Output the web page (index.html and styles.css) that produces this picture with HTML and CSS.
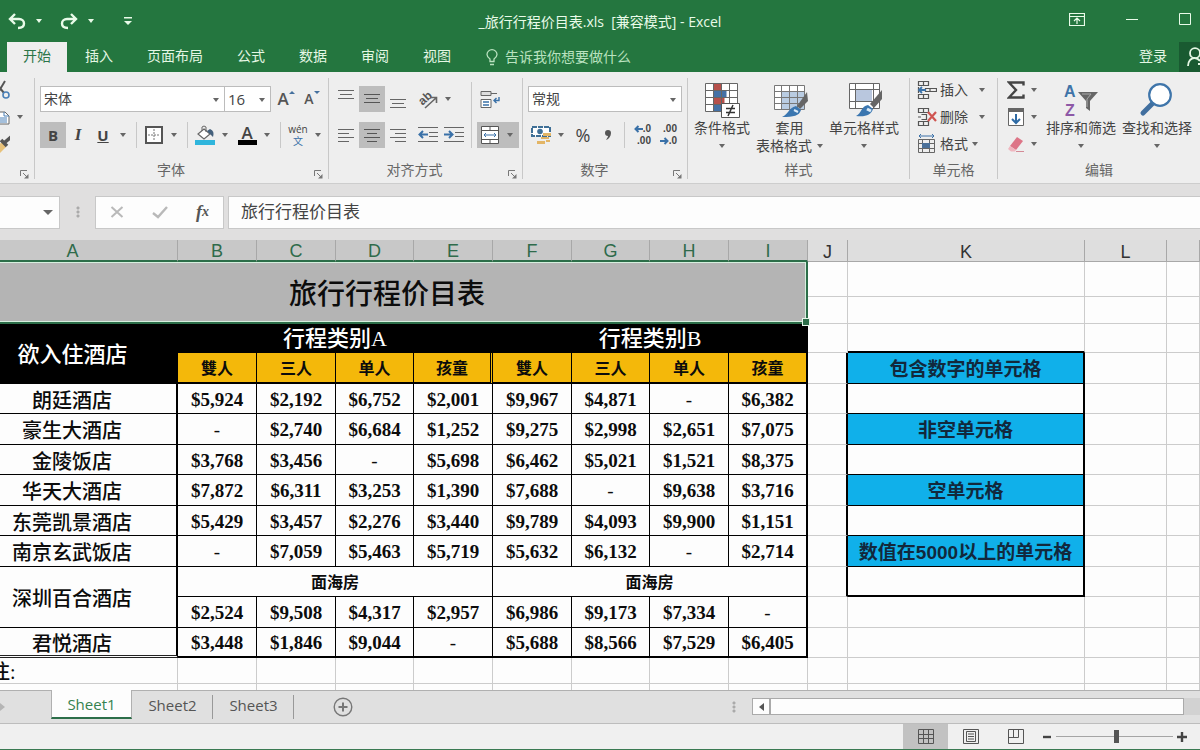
FILE: index.html
```html
<!DOCTYPE html>
<html lang="zh-CN">
<head>
<meta charset="utf-8">
<title>_旅行行程价目表.xls [兼容模式] - Excel</title>
<link rel="stylesheet" href="styles.css">
</head>
<body>
<header class="titlebar">
  <div class="quick">
    <button class="quick-btn" aria-label="撤消"><svg width="20" height="20" viewBox="0 0 20 20"><path d="M8 3 3 8l5 5M4 8h8c3 0 5 2 5 4.500S15 17 11 17" fill="none" stroke="currentColor" stroke-width="2.400"/></svg><i class="caret"></i></button>
    <button class="quick-btn" aria-label="恢复"><svg width="20" height="20" viewBox="0 0 20 20"><path d="m12 3 5 5-5 5M16 8H8c-3 0-5 2-5 4.500S5 17 9 17" fill="none" stroke="currentColor" stroke-width="2.400"/></svg><i class="caret"></i></button>
    <button class="quick-btn" aria-label="自定义快速访问工具栏"><svg width="8" height="9" viewBox="0 0 8 9"><path d="M0 0h8v1.500H0zM0 4h8L4 8z" fill="currentColor"/></svg></button>
  </div>
  <h1 class="doc-title">_旅行行程价目表.xls  [兼容模式] - Excel</h1>
  <div class="window-btns">
    <button aria-label="功能区显示选项"><svg width="16" height="13" viewBox="0 0 16 13"><path d="M.5.500h15v12H.5zM.5 3.500h15M8 11V5.500M5 8l3-3 3 3" fill="none" stroke="currentColor" stroke-width="1.200"/></svg></button>
    <button aria-label="最小化"><svg width="12" height="12" viewBox="0 0 12 12"><path d="M0 6.500h12" stroke="currentColor"/></svg></button>
    <button aria-label="最大化"><svg width="12" height="12" viewBox="0 0 12 12"><path d="M.5.500h11v11H.5z" fill="none" stroke="currentColor"/></svg></button>
  </div>
</header>

<nav class="tabs">
  <button class="tab tab-active">开始</button>
  <button class="tab">插入</button>
  <button class="tab">页面布局</button>
  <button class="tab">公式</button>
  <button class="tab">数据</button>
  <button class="tab">审阅</button>
  <button class="tab">视图</button>
  <button class="tell-me"><svg width="12" height="17" viewBox="0 0 12 17"><path d="M4 12.500V10C2 8.500 1 7.500 1 5.500a5 4.800 0 0 1 10 0c0 2-1 3-3 4.500v2.500zM4 15.500h4" fill="none" stroke="currentColor" stroke-width="1.300"/></svg>告诉我你想要做什么</button>
  <button class="sign-in">登录</button>
  <button class="share" aria-label="共享"><svg width="18" height="20" viewBox="0 0 18 20"><path d="M1 19c0-5 3-8 6.500-8 2 0 4 1 5.500 3M8 1.200a5 5 0 1 1 0 10 5 5 0 0 1 0-10M11 17h7" fill="none" stroke="currentColor" stroke-width="1.800"/></svg></button>
</nav>

<section class="ribbon">
  <div class="group group-clip">
    <div class="stack">
      <button class="row-btn" aria-label="剪切"><svg width="20" height="20" viewBox="0 0 20 20"><path d="m5 2 9 11M15 1l-6 10" stroke="#555" stroke-width="2" fill="none"/><circle cx="16" cy="15" r="3" fill="none" stroke="#4a80b8" stroke-width="1.600"/><circle cx="6" cy="15" r="3" fill="none" stroke="#4a80b8" stroke-width="1.600"/></svg></button>
      <button class="row-btn" aria-label="复制"><svg width="20" height="20" viewBox="0 0 20 20"><path d="M8 5h7l4 4v8H8z" fill="#fff" stroke="#666"/><path d="M14 5v4h5M10 11h7M10 13h7M10 15h7" fill="none" stroke="#4a80b8"/></svg><i class="caret"></i></button>
      <button class="row-btn" aria-label="格式刷"><svg width="20" height="20" viewBox="0 0 20 20"><path d="m5 14 7-6 4 5-6 6z" fill="#e8c27a"/><path d="m11 6 6 6M14 9l7-6" stroke="#555" stroke-width="3.600"/></svg></button>
    </div>
    <div class="group-foot"><span></span><button class="launch" aria-label="剪贴板设置"><svg width="9" height="9" viewBox="0 0 9 9"><path d="M.5 6V.500H7M3 3l4 4" fill="none" stroke="#777"/><path d="M8.500 4v4.500H4z" fill="#777"/></svg></button></div>
  </div>

  <div class="group group-font">
    <div class="tools">
      <div class="row">
        <span class="combo combo-font"><select aria-label="字体"><option>宋体</option></select></span><span class="combo combo-size"><select aria-label="字号"><option>16</option></select></span>
        <div class="after-combo">
          <button class="ib" aria-label="增大字号"><span class="ltr ltr-big">A</span><svg width="6" height="16" viewBox="0 0 6 16"><path d="M0 3h6L3 0z" fill="#44709e"/></svg></button><button class="ib" aria-label="减小字号"><span class="ltr">A</span><svg width="6" height="16" viewBox="0 0 6 16"><path d="M0 0h6L3 3z" fill="#44709e"/></svg></button>
        </div>
      </div>
      <div class="row">
        <button class="ib on" aria-label="加粗"><b class="biu">B</b></button>
        <button class="ib ib-i" aria-label="倾斜"><i class="biu biu-i">I</i></button>
        <button class="split" aria-label="下划线"><span class="ico"><u class="biu">U</u></span><i class="caret"></i></button>
        <span class="sep"></span>
        <button class="split" aria-label="边框"><span class="ico"><svg width="18" height="18" viewBox="0 0 18 18"><path d="M1 1h16v16H1z" fill="#fff" stroke="#555" stroke-width="2"/><path d="M9 3v12M3 9h12" stroke="#777" stroke-dasharray="2 1"/></svg></span><i class="caret"></i></button>
        <span class="sep"></span>
        <button class="split" aria-label="填充颜色"><span class="ico"><svg width="20" height="20" viewBox="0 0 20 20"><path d="M0 15h20v5H0z" fill="#2fb5dc"/><path d="m9 4 6 5-6 5-6-5z" fill="#fff" stroke="#666" stroke-width="1.200"/><path d="M7 6V2q2-2 4 0v5" fill="none" stroke="#666"/><path d="M15 4q5 2 3 8l-3-3-3-3z" fill="#44607c"/></svg></span><i class="caret"></i></button><button class="split" aria-label="字体颜色"><span class="ico"><span class="font-color">A</span></span><i class="caret"></i></button>
        <span class="sep"></span>
        <button class="split" aria-label="拼音"><span class="ico wen"><span>wén</span><span class="wen-zi">文</span></span><i class="caret"></i></button>
      </div>
    </div>
    <div class="group-foot"><span>字体</span><button class="launch" aria-label="字体设置"><svg width="9" height="9" viewBox="0 0 9 9"><path d="M.5 6V.500H7M3 3l4 4" fill="none" stroke="#777"/><path d="M8.500 4v4.500H4z" fill="#777"/></svg></button></div>
  </div>

  <div class="group group-align">
    <div class="cols">
      <div class="tools">
        <div class="row">
          <button class="ib" aria-label="顶端对齐"><svg width="18" height="20" viewBox="0 0 18 20"><path d="M1 1.500h16M3 5.500h12M1 9.500h16" stroke="#666"/></svg></button>
          <button class="ib on" aria-label="垂直居中"><svg width="18" height="20" viewBox="0 0 18 20"><path d="M1 5.500h16M3 9.500h12M1 13.500h16" stroke="#555"/></svg></button>
          <button class="ib" aria-label="底端对齐"><svg width="18" height="20" viewBox="0 0 18 20"><path d="M1 10.500h16M3 14.500h12M1 18.500h16" stroke="#666"/></svg></button>
          <button class="split split-gap" aria-label="方向"><span class="ico"><svg width="22" height="22" viewBox="0 0 22 22"><text x="1" y="14" transform="rotate(-42 8 10)" font-size="12" font-family="Liberation Sans" font-weight="700" fill="#555">ab</text><path d="m8 20 11-10M14 9.500h5.500V15" fill="none" stroke="#666" stroke-width="1.600"/></svg></span><i class="caret"></i></button>
        </div>
        <div class="row">
          <button class="ib" aria-label="左对齐"><svg width="18" height="16" viewBox="0 0 18 16"><path d="M1 2.500h16M1 6.500h11M1 10.500h16M1 14.500h11" stroke="#666"/></svg></button>
          <button class="ib on" aria-label="居中"><svg width="18" height="16" viewBox="0 0 18 16"><path d="M1 2.500h16M4 6.500h10M1 10.500h16M4 14.500h10" stroke="#555"/></svg></button>
          <button class="ib" aria-label="右对齐"><svg width="18" height="16" viewBox="0 0 18 16"><path d="M1 2.500h16M6 6.500h11M1 10.500h16M6 14.500h11" stroke="#666"/></svg></button>
          <span class="pair"><button class="ib" aria-label="减少缩进量"><svg width="20" height="16" viewBox="0 0 20 16"><path d="M0 .500h20M11 5.500h9M11 9.500h9M0 14.500h20" stroke="#666"/><path d="M10 7.500H2M5 4 1.500 7.500 5 11" fill="none" stroke="#3a71a8" stroke-width="2"/></svg></button><button class="ib" aria-label="增加缩进量"><svg width="20" height="16" viewBox="0 0 20 16"><path d="M0 .500h20M11 5.500h9M11 9.500h9M0 14.500h20" stroke="#666"/><path d="M0 7.500h8M5 4l3.500 3.500L5 11" fill="none" stroke="#3a71a8" stroke-width="2"/></svg></button></span>
        </div>
      </div>
      <span class="sep sep-tall"></span>
      <div class="tools">
        <div class="row"><button class="ib" aria-label="自动换行"><svg width="20" height="19" viewBox="0 0 20 19"><path d="M1 1.500h10v4H1zM11 3.500h6" fill="#ddd" stroke="#666"/><path d="M1 9.500h10v8H1z" fill="#fff" stroke="#666"/><path d="M3 12h6M3 15h6M19 7v3.500h-5M16.500 8 14 10.500l2.500 2.500" fill="none" stroke="#3a71a8" stroke-width="1.400"/></svg></button></div>
        <div class="row"><button class="split on" aria-label="合并后居中"><span class="ico"><svg width="18" height="18" viewBox="0 0 18 18"><path d="M.5.500h17v17H.5zM.5 4.500h17M.5 13.500h17M9 .500v4M9 13.500v4" fill="#fff" stroke="#555"/><path d="M3 9h12M5 7 3 9l2 2M13 7l2 2-2 2" fill="none" stroke="#3a71a8"/></svg></span><i class="caret"></i></button></div>
      </div>
    </div>
    <div class="group-foot"><span>对齐方式</span><button class="launch" aria-label="对齐设置"><svg width="9" height="9" viewBox="0 0 9 9"><path d="M.5 6V.500H7M3 3l4 4" fill="none" stroke="#777"/><path d="M8.500 4v4.500H4z" fill="#777"/></svg></button></div>
  </div>

  <div class="group group-num">
    <div class="tools">
      <div class="row"><span class="combo combo-num"><select aria-label="数字格式"><option>常规</option></select></span></div>
      <div class="row">
        <button class="split" aria-label="会计数字格式"><span class="ico"><svg width="20" height="20" viewBox="0 0 20 20"><path d="M1 2h18v9H1z" fill="#fff" stroke="#3f6f96" stroke-width="2" stroke-dasharray="5 1"/><circle cx="9" cy="6.500" r="2.800" fill="#3f6f96"/><path d="M12 8h8v3h-8zM10 12h8v2h-8zM6 16h8v3H6zM15 15h4v2h-4z" fill="#e3b565"/></svg></span><i class="caret"></i></button>
        <button class="ib" aria-label="百分比样式"><span class="pct">%</span></button>
        <button class="ib ib-i" aria-label="千位分隔样式"><svg width="8" height="12" viewBox="0 0 8 12"><path d="M1 4a3 3 0 1 1 6 0c0 3-2 6-5 7 1-2 2-3 2-4-2 0-3-1-3-3z" fill="#555"/></svg></button>
        <span class="sep"></span>
        <button class="ib dec" aria-label="增加小数位数"><span><svg width="9" height="8" viewBox="0 0 9 8"><path d="M9 4H2M4.500 1 1.500 4l3 3" fill="none" stroke="#3a71a8" stroke-width="2"/></svg>.0</span><span>.00</span></button><button class="ib dec" aria-label="减少小数位数"><span>.00</span><span><svg width="9" height="8" viewBox="0 0 9 8"><path d="M0 4h7M4.500 1l3 3-3 3" fill="none" stroke="#3a71a8" stroke-width="2"/></svg>.0</span></button>
      </div>
    </div>
    <div class="group-foot"><span>数字</span><button class="launch" aria-label="数字设置"><svg width="9" height="9" viewBox="0 0 9 9"><path d="M.5 6V.500H7M3 3l4 4" fill="none" stroke="#777"/><path d="M8.500 4v4.500H4z" fill="#777"/></svg></button></div>
  </div>

  <div class="group group-style">
    <div class="bigs">
      <button class="big"><svg width="36" height="36" viewBox="0 0 36 36"><path d="M1.500.500h32v28h-32z" fill="#fff"/><path d="M9.500.500h8v7h-8zM9.500 14.500h11v7h-11z" fill="#b6504b"/><path d="M9.500 7.500h13v7h-13zM9.500 21.500h8v7h-8z" fill="#4471a6"/><path d="M1.500.500h32v28h-32zM1.500 7.500h32M1.500 14.500h32M1.500 21.500h32M9.500.500v28M17.500.500v28M25.500.500v28" fill="none" stroke="#666"/><path d="M17.500 20.500h18v14h-18z" fill="#fff" stroke="#555"/><path d="M22 25.500h9M22 29.500h9M29 22l-5 11" stroke="#333" stroke-width="1.500"/></svg><span>条件格式</span><i class="caret"></i></button>
      <button class="big"><svg width="36" height="36" viewBox="0 0 36 36"><path d="M2.500 2.500h30v24h-30z" fill="#fff"/><path d="M10 8h22v18H10z" fill="#b9cce2"/><path d="M2.500 2.500h30v24h-30zM2.500 8.500h30M2.500 14.500h30M2.500 20.500h30M9.500 2.500v24M17.500 2.500v24M25.500 2.500v24" fill="none" stroke="#777"/><path d="m35 9 1 9-8 8-3-3z" fill="#666"/><path d="m24 23 5 4c-2 6-7 7-19 7 7-3 6-9 14-11z" fill="#3a76b0"/><path d="m22 27 4 2" stroke="#dcebf8" stroke-width="2"/></svg><span>套用</span><span>表格格式<i class="caret"></i></span></button>
      <button class="big"><svg width="36" height="36" viewBox="0 0 36 36"><path d="M3.500.500h30v25h-30z" fill="#fff"/><path d="M10 7h16v11H10z" fill="#b9c7de"/><path d="M3.500.500h30v25h-30zM3.500 6.500h30M3.500 18.500h30M9.500.500v25M27.500.500v25" fill="none" stroke="#666"/><path d="m36 7v9l-8 9-4-4z" fill="#666"/><path d="m22 22 5 4c-2 6-7 8-17 7 6-3 5-10 12-11z" fill="#3a76b0"/><path d="m21 26 4 2" stroke="#dcebf8" stroke-width="3"/></svg><span>单元格样式</span><i class="caret"></i></button>
    </div>
    <div class="group-foot"><span>样式</span></div>
  </div>

  <div class="group group-cells">
    <div class="stack">
      <button class="row-btn"><svg width="20" height="20" viewBox="0 0 20 20"><path d="M1.500 1.500h10v4h-10zM6.500 1.500v4M1.500 14.500h10v4h-10zM6.500 14.500v4M8.500 8.500h11v3h-11zM1.500 7v6M13 8.500v3" fill="none" stroke="#555" stroke-width="1.200"/><path d="M9 10H2M5 7l-3 3 3 3" fill="none" stroke="#3a71a8" stroke-width="1.800"/></svg><span>插入</span><i class="caret"></i></button>
      <button class="row-btn"><svg width="20" height="20" viewBox="0 0 20 20"><path d="M1.500 1.500h10v4h-10zM6.500 1.500v4M1.500 14.500h10v4h-10zM6.500 14.500v4M4.500 7.500h5v5h-5M1 10h3" fill="none" stroke="#555" stroke-width="1.200"/><path d="m11 5 8 9M19 5l-8 9" stroke="#cf5450" stroke-width="2.200"/></svg><span>删除</span><i class="caret"></i></button>
      <button class="row-btn row-btn-tight"><svg width="20" height="20" viewBox="0 0 20 20"><path d="M1.500 5.500h16v13h-16zM1.500 9.500h16M1.500 14.500h16M5.500 5.500v13M12.500 5.500v13" fill="none" stroke="#666"/><path d="M5 9h8v5H5z" fill="#4a6f98"/><path d="M2 2h15M4 0 2 2l2 2M15 0l2 2-2 2" fill="none" stroke="#3a71a8"/></svg><span>格式</span><i class="caret"></i></button>
    </div>
    <div class="group-foot"><span>单元格</span></div>
  </div>

  <div class="group group-edit">
    <div class="cols">
      <div class="stack">
        <button class="row-btn" aria-label="自动求和"><svg width="18" height="18" viewBox="0 0 18 18"><path d="M16.500 4.500V1.500H2l7 7.500-7 7.500h14.500v-3" fill="none" stroke="#444" stroke-width="2.400"/></svg><i class="caret"></i></button>
        <button class="row-btn" aria-label="填充"><svg width="18" height="18" viewBox="0 0 18 18"><path d="M1.500.500h15v17h-15z" fill="#fff" stroke="#666"/><path d="M1 0h16v4H1z" fill="#666"/><path d="M9 6v9M5 11l4 4 4-4" fill="none" stroke="#2f6ba5" stroke-width="2"/></svg><i class="caret"></i></button>
        <button class="row-btn" aria-label="清除"><svg width="18" height="18" viewBox="0 0 18 18"><path d="m10 2 6 4-7 9-6-4z" fill="#dd7587"/><path d="m3 11 6 4-1 1.500H4L1 14z" fill="#f0b6bf"/><path d="M9 16.500h8" stroke="#d48a96"/></svg><i class="caret"></i></button>
      </div>
      <div class="bigs">
        <button class="big"><svg width="36" height="36" viewBox="0 0 36 36"><text x="1" y="14" font-family="Liberation Sans" font-size="16" font-weight="700" fill="#3f74a8">A</text><text x="2" y="33" font-family="Liberation Sans" font-size="16" font-weight="700" fill="#8d58a6">Z</text><path d="M15 9h20l-8 9v10l-4-3v-7z" fill="#666"/><path d="M19 11h9l-4 5v8" fill="none" stroke="#aaa"/></svg><span>排序和筛选</span><i class="caret"></i></button>
        <button class="big"><svg width="36" height="36" viewBox="0 0 36 36"><path d="M15 19 4 30" stroke="#416f9f" stroke-width="5" stroke-linecap="round"/><circle cx="21" cy="12" r="10.800" fill="#fff" stroke="#3f75aa" stroke-width="2.200"/></svg><span>查找和选择</span><i class="caret"></i></button>
      </div>
    </div>
    <div class="group-foot"><span>编辑</span></div>
  </div>
</section>

<section class="formula-bar">
  <button class="name-box" aria-label="名称框"><i class="caret caret-lg"></i></button>
  <span class="dots"></span>
  <div class="fx-box">
    <button aria-label="取消"><svg width="14" height="14" viewBox="0 0 14 14"><path d="m1.500 2 11 10M12.500 2l-11 10" stroke="#b9b9b9" stroke-width="2"/></svg></button>
    <button aria-label="输入"><svg width="16" height="14" viewBox="0 0 16 14"><path d="m1 8 5 4 9-10" fill="none" stroke="#b9b9b9" stroke-width="2.400"/></svg></button>
    <button class="fx" aria-label="插入函数">f<small>x</small></button>
  </div>
  <input class="formula" aria-label="编辑栏" value="旅行行程价目表">
</section>

<main class="sheet">
<table class="grid">
  <colgroup><col class="w-a"><col class="w-p"><col class="w-p"><col class="w-q"><col class="w-p"><col class="w-p"><col class="w-q"><col class="w-p"><col class="w-p"><col class="w-j"><col class="w-k"><col class="w-l"><col></colgroup>
  <thead><tr class="r-head"><th class="sel">A</th><th class="sel">B</th><th class="sel">C</th><th class="sel">D</th><th class="sel">E</th><th class="sel">F</th><th class="sel">G</th><th class="sel">H</th><th class="sel">I</th><th>J</th><th>K</th><th>L</th><th></th></tr></thead>
  <tbody>
  <tr class="r1"><td class="title" colspan="9" rowspan="2">旅行行程价目表<span class="handle"></span></td><td></td><td></td><td></td><td></td></tr>
  <tr class="r2"><td></td><td></td><td></td><td></td></tr>
  <tr class="r3"><td class="dark" rowspan="2">欲入住酒店</td><td class="dark" colspan="4">行程类别A</td><td class="dark" colspan="4">行程类别B</td><td></td><td class="k-top"></td><td></td><td></td></tr>
  <tr class="odd"><td class="kind">雙人</td><td class="kind">三人</td><td class="kind">单人</td><td class="kind kind-split">孩童</td><td class="kind">雙人</td><td class="kind">三人</td><td class="kind">单人</td><td class="kind edge">孩童</td><td class="j-edge"></td><td class="k-head">包含数字的单元格</td><td></td><td></td></tr>
  <tr class="even"><td class="hotel">朗廷酒店</td><td class="p">$5,924</td><td class="p">$2,192</td><td class="p">$6,752</td><td class="p">$2,001</td><td class="p">$9,967</td><td class="p">$4,871</td><td class="p none">-</td><td class="p edge">$6,382</td><td class="j-edge"></td><td class="k-cell"></td><td></td><td></td></tr>
  <tr class="odd"><td class="hotel">豪生大酒店</td><td class="p none">-</td><td class="p">$2,740</td><td class="p">$6,684</td><td class="p">$1,252</td><td class="p">$9,275</td><td class="p">$2,998</td><td class="p">$2,651</td><td class="p edge">$7,075</td><td class="j-edge"></td><td class="k-head">非空单元格</td><td></td><td></td></tr>
  <tr class="even"><td class="hotel">金陵饭店</td><td class="p">$3,768</td><td class="p">$3,456</td><td class="p none">-</td><td class="p">$5,698</td><td class="p">$6,462</td><td class="p">$5,021</td><td class="p">$1,521</td><td class="p edge">$8,375</td><td class="j-edge"></td><td class="k-cell"></td><td></td><td></td></tr>
  <tr class="odd"><td class="hotel">华天大酒店</td><td class="p">$7,872</td><td class="p">$6,311</td><td class="p">$3,253</td><td class="p">$1,390</td><td class="p">$7,688</td><td class="p none">-</td><td class="p">$9,638</td><td class="p edge">$3,716</td><td class="j-edge"></td><td class="k-head">空单元格</td><td></td><td></td></tr>
  <tr class="even"><td class="hotel">东莞凯景酒店</td><td class="p">$5,429</td><td class="p">$3,457</td><td class="p">$2,276</td><td class="p">$3,440</td><td class="p">$9,789</td><td class="p">$4,093</td><td class="p">$9,900</td><td class="p edge">$1,151</td><td class="j-edge"></td><td class="k-cell"></td><td></td><td></td></tr>
  <tr class="odd"><td class="hotel">南京玄武饭店</td><td class="p none">-</td><td class="p">$7,059</td><td class="p">$5,463</td><td class="p">$5,719</td><td class="p">$5,632</td><td class="p">$6,132</td><td class="p none">-</td><td class="p edge">$2,714</td><td class="j-edge"></td><td class="k-head">数值在5000以上的单元格</td><td></td><td></td></tr>
  <tr class="even"><td class="hotel" rowspan="2">深圳百合酒店</td><td class="p sea" colspan="4">面海房</td><td class="p sea edge" colspan="4">面海房</td><td class="j-edge"></td><td class="k-cell k-last"></td><td></td><td></td></tr>
  <tr class="odd"><td class="p">$2,524</td><td class="p">$9,508</td><td class="p">$4,317</td><td class="p">$2,957</td><td class="p">$6,986</td><td class="p">$9,173</td><td class="p">$7,334</td><td class="p none edge">-</td><td></td><td></td><td></td><td></td></tr>
  <tr class="even last"><td class="hotel">君悦酒店</td><td class="p">$3,448</td><td class="p">$1,846</td><td class="p">$9,044</td><td class="p none">-</td><td class="p">$5,688</td><td class="p">$8,566</td><td class="p">$7,529</td><td class="p edge">$6,405</td><td></td><td></td><td></td><td></td></tr>
  <tr class="r-plain"><td class="note">注:</td><td></td><td></td><td></td><td></td><td></td><td></td><td></td><td></td><td></td><td></td><td></td><td></td></tr>
  <tr class="r-plain"><td></td><td></td><td></td><td></td><td></td><td></td><td></td><td></td><td></td><td></td><td></td><td></td><td></td></tr>
  </tbody>
</table>
</main>

<nav class="sheet-tabs">
  <button class="nav-next" aria-label="下一张工作表"><svg width="5" height="8" viewBox="0 0 5 8"><path d="M0 0v8l5-4z" fill="#b5b5b5"/></svg></button>
  <button class="stab stab-active">Sheet1</button>
  <button class="stab">Sheet2</button>
  <button class="stab">Sheet3</button>
  <button class="add-sheet" aria-label="新工作表"><svg width="20" height="20" viewBox="0 0 20 20"><circle cx="10" cy="10" r="8.800" fill="none" stroke="#777" stroke-width="1.400"/><path d="M10 5.500v9M5.500 10h9" stroke="#777" stroke-width="2"/></svg></button>
  <span class="dots dots-end"></span>
  <div class="hscroll"><button class="hs-left" aria-label="向左滚动"><svg width="5" height="8" viewBox="0 0 5 8"><path d="M5 0v8L0 4z" fill="#555"/></svg></button><span class="hs-thumb"></span></div>
</nav>

<footer class="status">
  <div class="views">
    <button class="view view-on" aria-label="普通"><svg width="16" height="15" viewBox="0 0 16 15"><path d="M.5.500h15v14H.5zM.5 5.500h15M.5 9.500h15M5.500.500v14M10.500.500v14" fill="none" stroke="#555"/></svg></button>
    <button class="view" aria-label="页面布局"><svg width="16" height="15" viewBox="0 0 16 15"><path d="M.5.500h15v14H.5zM3.500 2.500h9v10h-9zM5 5h6M5 7.500h6M5 10h6" fill="none" stroke="#555"/></svg></button>
    <button class="view" aria-label="分页预览"><svg width="16" height="15" viewBox="0 0 16 15"><path d="M.5.500h15v14H.5zM.5 8.500h10v-8M5.500.500v8" fill="none" stroke="#555"/></svg></button>
  </div>
  <button class="zoom-btn" aria-label="缩小"><svg width="10" height="10" viewBox="0 0 10 10"><path d="M1 5h8" stroke="#444" stroke-width="2.400"/></svg></button>
  <input class="zoom" type="range" aria-label="缩放" min="0" max="100" value="52">
  <button class="zoom-btn" aria-label="放大"><svg width="10" height="10" viewBox="0 0 10 10"><path d="M0 5h10M5 0v10" stroke="#444" stroke-width="2.400"/></svg></button>
</footer>
</body>
</html>
```
FILE: styles.css
```css
* { box-sizing: border-box; }

:root {
  --green: #24763f;
  --ribbon: #eeeeee;
  --line: #c8c8c8;
  --ink: #444444;
}

body {
  margin: 0;
  height: 100vh;
  display: flex;
  flex-direction: column;
  overflow: hidden;
  background: #e0dfdf;
  color: var(--ink);
  font: 14px/18px "Open Sans", "Noto Sans CJK SC", sans-serif;
}

button, select, input {
  font: inherit;
  color: inherit;
  border: 0;
  padding: 0;
  margin: 0;
  background: none;
  border-radius: 0;
}

button { display: flex; align-items: center; justify-content: center; white-space: nowrap; }
svg { display: block; flex: none; }

.caret {
  flex: none;
  width: 0;
  height: 0;
  border: 3px solid transparent;
  border-top: 4px solid #666;
  border-bottom: 0;
}
.caret-lg { border-width: 5px 5px 0; }

/* title bar */
.titlebar {
  flex: none;
  height: 42px;
  display: grid;
  grid-template-columns: 1fr auto 1fr;
  align-items: center;
  background: var(--green);
  color: #e9fbe9;
}
.titlebar .caret { border-top-color: #e9fbe9; }
.quick { display: flex; gap: 16px; padding-left: 6px; }
.quick-btn { gap: 9px; width: 36px; height: 20px; }
.doc-title { margin: 0; padding-top: 2px; font-size: 14px; font-weight: 400; white-space: pre; }
.window-btns { display: flex; justify-content: flex-end; gap: 41px; padding: 0 9px 4px 0; }

/* ribbon tabs */
.tabs {
  flex: none;
  height: 30px;
  display: flex;
  gap: 2px;
  padding-left: 7px;
  background: var(--green);
  color: #e4f7e4;
}
.tab { padding: 0 16px 2px; }
.tab-active { background: var(--ribbon); color: #2c7549; }
.tell-me { gap: 7px; padding-left: 17px; color: #b9e2bf; }
.sign-in { margin-left: auto; padding: 0 10px 2px; }
.share { width: 21px; justify-content: flex-start; padding-left: 8px; overflow: hidden; background: #195a31; }

/* ribbon */
.ribbon {
  flex: none;
  height: 112px;
  display: flex;
  padding: 6px 0 4px;
  overflow: hidden;
  background: var(--ribbon);
  border-bottom: 1px solid #cdcdcd;
}
.group { flex: none; display: flex; flex-direction: column; border-right: 1px solid var(--line); }
.group-clip { width: 35px; overflow: hidden; }
.group-font { width: 294px; padding-left: 5px; }
.group-align { width: 194px; padding-left: 4px; }
.group-num { width: 165px; padding-left: 5px; }
.group-style { width: 222px; }
.group-cells { width: 88px; }
.group-edit { width: 202px; border-right: 0; }
.group-foot { display: flex; height: 18px; margin-top: auto; }
.group-foot span { flex: 1; text-align: center; color: #666; }
.launch { width: 26px; padding-right: 5px; justify-content: flex-end; align-items: flex-end; }

.tools { display: flex; flex-direction: column; gap: 10px; padding-top: 8px; }
.row { display: flex; height: 26px; }
.cols { display: flex; }
.ib { width: 26px; height: 26px; flex: none; }
.ib-i { width: 24px; }
.on { background: #bdbdbd; }
.split { width: 42px; height: 26px; flex: none; justify-content: flex-start; }
.split .ico { width: 26px; display: flex; justify-content: center; flex: none; }
.split .caret { margin-left: 4px; }
.split-gap, .pair { margin-left: 4px; }
.pair, .after-combo { display: flex; }
.after-combo { padding-left: 2px; }
.sep { width: 1px; margin: 0 4px; background: var(--line); }
.sep-tall { margin: 4px 5px 0 4px; }

.combo { position: relative; display: flex; background: #fff; border: 1px solid #bcbcbc; }
.combo::after {
  content: "";
  position: absolute;
  right: 5px;
  top: 11px;
  border: 3px solid transparent;
  border-top: 4px solid #666;
  border-bottom: 0;
  pointer-events: none;
}
.combo select { flex: 1; appearance: none; padding-left: 3px; }
.combo-font { width: 185px; }
.combo-size { width: 46px; border-left: 0; font-size: 15px; }
.combo-num { width: 154px; }

.ltr { font-weight: 600; font-size: 14px; color: #555; }
.ltr-big { font-size: 17px; }
.biu { font-size: 15px; font-weight: 700; color: #444; }
.biu-i { font-family: "Liberation Serif", serif; font-size: 17px; font-style: italic; }
.font-color { width: 19px; height: 19px; border-bottom: 5px solid #000; text-align: center; font-weight: 600; font-size: 17px; line-height: 14px; }
.split .wen { flex-direction: column; align-items: center; font-size: 10px; line-height: 12px; }
.wen > span { height: 12px; }
.wen-zi { color: #3a71a8; font-size: 10px; }
.pct { font-size: 18px; }
.dec { flex-direction: column; align-items: stretch; font: 700 10px/12px "Liberation Sans", sans-serif; padding: 0 4px; }
.dec span { display: flex; align-items: center; justify-content: flex-end; }

.bigs { display: flex; gap: 6px; padding: 5px 0 0 6px; }
.group-edit .bigs { padding-left: 9px; }
.big { flex-direction: column; justify-content: flex-start; min-width: 56px; }
.big span { display: flex; align-items: center; }
.big > .caret { margin-top: 7px; }
.big span .caret { margin-left: 5px; }

.stack { display: flex; flex-direction: column; gap: 3px; }
.row-btn { height: 24px; justify-content: flex-start; }
.row-btn span { padding-left: 3px; }
.group-clip .row-btn { margin-left: -10px; gap: 7px; }
.group-cells .stack { padding-left: 7px; }
.group-cells .caret { margin-left: 11px; }
.group-cells .row-btn-tight .caret { margin-left: 4px; }
.group-edit .stack { padding-left: 9px; }
.group-edit .stack .caret { margin-left: 6px; }

/* formula bar */
.formula-bar { flex: none; height: 56px; display: flex; align-items: center; }
.name-box { width: 60px; height: 33px; justify-content: flex-end; padding-right: 6px; background: #fdfdfd; border: 1px solid var(--line); border-left: 0; }
.dots { width: 35px; height: 12px; background: radial-gradient(circle, #aaa 1px, transparent 2px) center / 4px 4px repeat-y; }
.fx-box { width: 129px; height: 33px; display: flex; align-items: center; justify-content: space-around; background: #fdfdfd; border: 1px solid var(--line); }
.fx { font: italic 700 18px "Liberation Serif", serif; color: #555; }
.fx small { font-size: 14px; }
.formula { flex: 1; min-width: 0; height: 33px; margin-left: 4px; padding: 0 0 3px 12px; background: #fdfdfd; border: 1px solid var(--line); border-right: 0; font-size: 17px; }

/* sheet */
.sheet { flex: 1; min-height: 0; overflow: hidden; background: #fdfdfd; }
.grid {
  width: calc(100% + 32px);
  margin-left: -32px;
  table-layout: fixed;
  border-collapse: separate;
  border-spacing: 0;
  color: #0c0c0c;
  font-family: "Liberation Serif", "Noto Sans CJK SC", serif;
  line-height: 22px;
}
.w-a { width: 210px; }
.w-p { width: 79px; }
.w-q { width: 78px; }
.w-j { width: 40px; }
.w-k { width: 237px; }
.w-l { width: 82px; }

.r-head { height: 22px; }
.r1 { height: 35px; }
.r2 { height: 27px; }
.r3 { height: 29px; }
.odd { height: 31px; }
.even { height: 30px; }
.r-plain { height: 26px; }

.grid th, .grid td { padding: 2px 0 0; text-align: center; vertical-align: middle; white-space: nowrap; border: 0 solid #cccccc; border-width: 0 1px 1px 0; }
.grid th { font: 18px/18px "Liberation Sans", sans-serif; color: #333; background: #dedede; border-color: #a8a8a8; }
.grid th.sel { background: #c8c8c8; color: #2f6b4b; border-bottom: 2px solid #2c6e49; border-right-color: #a8a8a8; }

.grid .title { position: relative; padding-top: 6px; background: #b4b4b4; font-size: 28px; font-weight: 500; border: 0 solid #2c6e49; border-width: 0 2px 2px 0; box-shadow: inset -1px -1px #d6f0de, inset 0 1px #d6f0de; }
.handle { position: absolute; right: -3px; bottom: -3px; width: 6px; height: 6px; background: #2c6e49; outline: 1px solid #e6f5ea; }
.grid .dark { background: #000; color: #fff; border-color: #000; font-size: 22px; font-weight: 500; }
.grid .kind { background: #f4b80a; font-size: 16px; font-weight: 700; border-color: #000; border-bottom-width: 2px; }
.grid .kind-split { border-right: 3px double #000; }
.grid .hotel { padding-top: 4px; border-color: #000; border-right-width: 2px; font-size: 20px; font-weight: 500; }
.grid .p { border-color: #000; font-size: 19px; font-weight: 700; }
.grid .none { font-weight: 400; }
.grid .sea { font-size: 16px; }
.grid .edge { border-right-width: 2px; }
.grid .last .p { border-bottom-width: 2px; }
.grid .last .hotel { border-bottom: 3px double #222; }
.grid .note { text-align: left; padding-left: 22px; font-size: 20px; font-weight: 500; }

.grid .j-edge { border-right: 2px solid #000; }
.grid .k-top { border-bottom: 2px solid #000; }
.grid .k-head, .grid .k-cell { border-color: #000; border-right-width: 2px; }
.grid .k-head { padding-top: 4px; background: #10b0ea; color: #12283c; font-family: "Liberation Sans", "Noto Sans CJK SC", sans-serif; font-size: 19px; font-weight: 700; }
.grid .k-last { border-bottom-width: 2px; }

/* sheet tabs */
.sheet-tabs { flex: none; height: 34px; display: flex; border-bottom: 1px solid #bdbdbd; background: #e0e0e0; box-shadow: inset 0 1px #b0b0b0; font-size: 15px; color: #555; }
.nav-next { width: 51px; justify-content: flex-start; }
.stab { position: relative; width: 81px; height: 29px; }
.stab::after { content: ""; position: absolute; right: 0; top: 5px; bottom: 0; width: 1px; background: #999; }
.stab-active { background: #fdfdfd; color: #35824f; border: 1px solid #b0b0b0; border-width: 0 1px 2px; border-bottom-color: #2c6e49; }
.stab-active::after { content: none; }
.add-sheet { width: 97px; }
.dots-end { width: 30px; align-self: center; margin-left: auto; }
.hscroll { width: 448px; height: 17px; align-self: center; display: flex; margin-left: 3px; background: #d2d2d2; }
.hs-left { width: 18px; background: #fdfdfd; border: 1px solid #aaa; }
.hs-thumb { flex: 1; margin-right: 16px; background: #fdfdfd; border: 1px solid #aaa; }

/* status bar */
.status { flex: none; height: 26px; display: flex; align-items: center; justify-content: flex-end; padding-right: 12px; background: #f0f0f0; border-bottom: 1px solid #3a7a52; }
.views { display: flex; margin-right: 3px; }
.view { width: 45px; height: 25px; }
.view-on { background: #c2c2c2; }
.zoom-btn { width: 12px; height: 20px; }
.zoom { appearance: none; width: 117px; height: 14px; margin: 0 3px; background: linear-gradient(#a5a5a5, #a5a5a5) center / 100% 1px no-repeat; }
.zoom::-webkit-slider-thumb { appearance: none; width: 5px; height: 13px; background: #555; }
```
